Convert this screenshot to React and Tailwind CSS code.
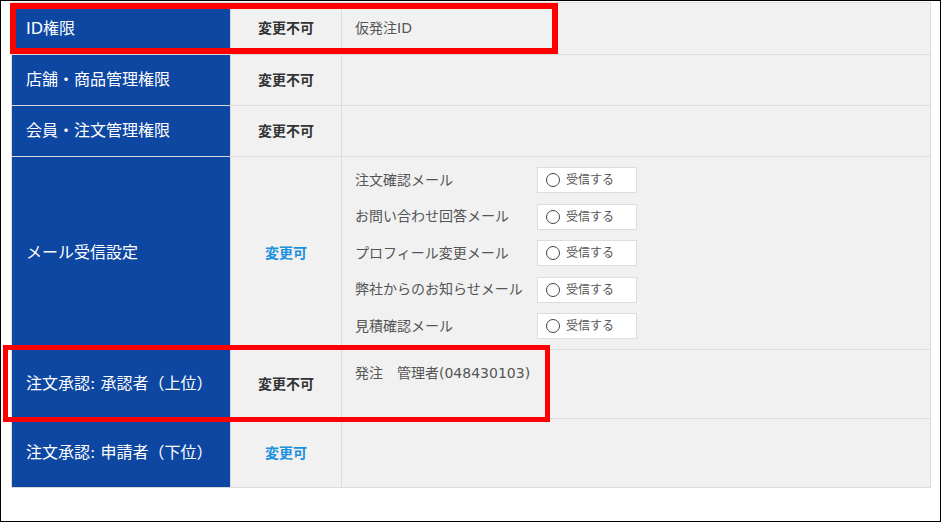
import React from "react";

const font = { fontFamily: '"DejaVu Sans", "Noto Sans CJK JP", "Noto Sans", sans-serif' };

function Label({ children, className = "" }) {
  return (
    <div className={"bg-[#0d47a1] text-white text-[16px] pl-[14px] flex items-center border-r border-b border-[#d8d8d8] " + className}>
      {children}
    </div>
  );
}

function Mid({ children, blue }) {
  return (
    <div className={"bg-[#f1f1f1] border-r border-b border-[#dddddd] flex items-center justify-center text-[14px] font-bold " + (blue ? "text-[#1a8fe0]" : "text-[#333333]")}>
      {children}
    </div>
  );
}

function Right({ children, className = "" }) {
  return (
    <div className={"bg-[#f1f1f1] border-r border-b border-[#dddddd] pl-[13px] text-[14px] text-[#555555] " + className}>
      {children}
    </div>
  );
}

const mails = [
  "注文確認メール",
  "お問い合わせ回答メール",
  "プロフィール変更メール",
  "弊社からのお知らせメール",
  "見積確認メール",
];

export default function App() {
  return (
    <div className="w-[942px] h-[523px] bg-white" style={font}>
      <div className="relative w-[941px] h-[522px] border border-black overflow-hidden">
        <div className="ml-[10px] mt-[1px] w-[920px] border-l border-t border-[#dddddd] grid grid-cols-[219px_111px_589px] grid-rows-[52px_51px_51px_193px_69px_69px]">
          <Label>ID権限</Label>
          <Mid>変更不可</Mid>
          <Right className="flex items-center">仮発注ID</Right>

          <Label>店舗・商品管理権限</Label>
          <Mid>変更不可</Mid>
          <Right />

          <Label>会員・注文管理権限</Label>
          <Mid>変更不可</Mid>
          <Right />

          <Label>メール受信設定</Label>
          <Mid blue>変更可</Mid>
          <Right className="py-[10px]">
            <div className="flex flex-col gap-[10.5px]">
              {mails.map((m) => (
                <div key={m} className="flex items-center h-[26px]">
                  <div className="w-[182px]">{m}</div>
                  <div className="w-[100px] h-[26px] bg-white border border-[#dddddd] flex items-center pl-[8px]">
                    <span className="w-[14px] h-[14px] rounded-full border-[1.5px] border-[#444444] bg-white"></span>
                    <span className="ml-[6px] text-[12px] text-[#555555]">受信する</span>
                  </div>
                </div>
              ))}
            </div>
          </Right>

          <Label>注文承認: 承認者（上位）</Label>
          <Mid>変更不可</Mid>
          <Right className="pt-[13px] leading-[20px]">発注　管理者(048430103)</Right>

          <Label>注文承認: 申請者（下位）</Label>
          <Mid blue>変更可</Mid>
          <Right />
        </div>

        <div className="absolute left-[9px] top-[2px] w-[548px] h-[51px] border-[6px] border-[#ff0000]"></div>
        <div className="absolute left-[2px] top-[344px] w-[547px] h-[77px] border-[5px] border-[#ff0000]"></div>
      </div>
    </div>
  );
}
